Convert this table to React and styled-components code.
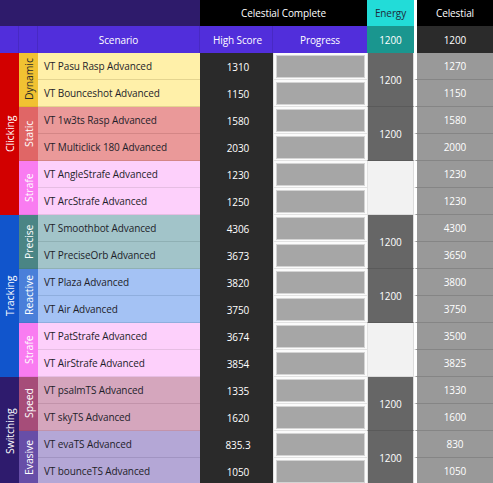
import React from 'react'
import styled, { createGlobalStyle } from 'styled-components'

const Global = createGlobalStyle`
  html, body {
    margin: 0;
    padding: 0;
    background: #fff;
    overflow: hidden;
  }
  body {
    font-family: 'Open Sans', 'Noto Sans', sans-serif;
  }
`

const Sheet = styled.div`
  display: grid;
  grid-template-columns: 19px 19px 162px 73px 94px 47px 79px;
  grid-template-rows: 26px 27px;
  grid-auto-rows: 27px;
  width: 493px;
  font-size: 10px;
  letter-spacing: -0.1px;
`

const Head = styled.div`
  grid-column: span ${p => p.$span || 1};
  background: ${p => p.$bg};
  color: ${p => p.$color || '#fff'};
  display: flex;
  align-items: center;
  justify-content: center;
  box-sizing: border-box;
  padding-left: ${p => p.$shift || 0}px;
  border-left: ${p => (p.$gap ? '3px solid #fff' : 'none')};
  border-right: ${p => (p.$line ? '1px solid rgba(0,0,0,0.1)' : 'none')};
`

const Category = styled.div`
  grid-row: span ${p => p.$rows};
  background: ${p => p.$bg};
  color: #fff;
  display: flex;
  align-items: center;
  justify-content: center;
  writing-mode: vertical-rl;
  transform: rotate(180deg);
  font-size: 10.5px;
`

const Sub = styled(Category)`
  color: ${p => p.$color || '#fff'};
  font-size: 10.5px;
  border-top: 1px solid rgba(0, 0, 0, 0.06);
`

const Scenario = styled.div`
  background: ${p => p.$bg};
  color: #1e1e2a;
  display: flex;
  align-items: center;
  padding-left: 6px;
  box-sizing: border-box;
  border-bottom: 1px solid ${p => p.$line};
  white-space: nowrap;
`

const Score = styled.div`
  background: #2a2a2a;
  color: #fff;
  display: flex;
  align-items: center;
  justify-content: center;
  padding-left: 3px;
`

const Progress = styled.div`
  background: #fbfbfb;
  padding: 2px 2px 1px 2px;
  box-sizing: border-box;
  border-left: 1px solid #e2e2e2;
  border-bottom: 1px solid #e2e2e2;
`

const Bar = styled.div`
  height: 100%;
  background: #a6a6a6;
  border: 1px solid #d4d4d4;
  box-sizing: border-box;
`

const Energy = styled.div`
  grid-row: span 2;
  background: ${p => (p.$empty ? '#f2f2f2' : '#666666')};
  color: #fff;
  display: flex;
  align-items: center;
  justify-content: center;
  box-sizing: border-box;
  border-left: 1px solid #e2e2e2;
  border-right: 1px solid #dcdcdc;
  border-bottom: 1px solid ${p => (p.$empty ? '#dcdcdc' : '#5a5a5a')};
`

const Celestial = styled.div`
  background: #999999;
  color: #fff;
  display: flex;
  align-items: center;
  justify-content: center;
  box-sizing: border-box;
  border-left: 3px solid #fff;
  border-bottom: 1px solid #858585;
`

const groups = [
  {
    name: 'Clicking', bg: '#d20000',
    subs: [
      { name: 'Dynamic', bg: '#f1c232', color: '#2a2a2a', row: '#fff0a9', line: '#e4d48f', energy: '1200',
        items: [['VT Pasu Rasp Advanced', '1310', '1270'], ['VT Bounceshot Advanced', '1150', '1150']] },
      { name: 'Static', bg: '#e06666', row: '#ea9999', line: '#d48686', energy: '1200',
        items: [['VT 1w3ts Rasp Advanced', '1580', '1580'], ['VT Multiclick 180 Advanced', '2030', '2000']] },
      { name: 'Strafe', bg: '#f97cf1', row: '#fdd0fb', line: '#e6bde3',
        items: [['VT AngleStrafe Advanced', '1230', '1230'], ['VT ArcStrafe Advanced', '1250', '1230']] },
    ],
  },
  {
    name: 'Tracking', bg: '#1155cc',
    subs: [
      { name: 'Precise', bg: '#4a8585', row: '#a2c4c9', line: '#8fb0b4', energy: '1200',
        items: [['VT Smoothbot Advanced', '4306', '4300'], ['VT PreciseOrb Advanced', '3673', '3650']] },
      { name: 'Reactive', bg: '#4a7fd9', row: '#a4c2f4', line: '#8faede', energy: '1200',
        items: [['VT Plaza Advanced', '3820', '3800'], ['VT Air Advanced', '3750', '3750']] },
      { name: 'Strafe', bg: '#f97cf1', row: '#fdd0fb', line: '#e6bde3',
        items: [['VT PatStrafe Advanced', '3674', '3500'], ['VT AirStrafe Advanced', '3854', '3825']] },
    ],
  },
  {
    name: 'Switching', bg: '#2e1b6d',
    subs: [
      { name: 'Speed', bg: '#a64d79', row: '#d5a6bd', line: '#c293aa', energy: '1200',
        items: [['VT psalmTS Advanced', '1335', '1330'], ['VT skyTS Advanced', '1620', '1600']] },
      { name: 'Evasive', bg: '#674ea7', row: '#b4a7d6', line: '#a194c2', energy: '1200',
        items: [['VT evaTS Advanced', '835.3', '830'], ['VT bounceTS Advanced', '1050', '1050']] },
    ],
  },
]

export default function App() {
  const cells = []
  groups.forEach(g => {
    const total = g.subs.reduce((n, s) => n + s.items.length, 0)
    g.subs.forEach((s, si) => {
      s.items.forEach(([name, hs, cel], i) => {
        const key = `${g.name}-${s.name}-${i}`
        if (si === 0 && i === 0) {
          cells.push(<Category key={key + 'c'} $rows={total} $bg={g.bg}>{g.name}</Category>)
        }
        if (i === 0) {
          cells.push(
            <Sub key={key + 's'} $rows={s.items.length} $bg={s.bg} $color={s.color}>{s.name}</Sub>
          )
        }
        cells.push(<Scenario key={key + 'n'} $bg={s.row} $line={s.line}>{name}</Scenario>)
        cells.push(<Score key={key + 'h'}>{hs}</Score>)
        cells.push(<Progress key={key + 'p'}><Bar /></Progress>)
        if (i === 0) {
          cells.push(<Energy key={key + 'e'} $empty={!s.energy}>{s.energy}</Energy>)
        }
        cells.push(<Celestial key={key + 'x'}>{cel}</Celestial>)
      })
    })
  })

  return (
    <>
      <Global />
      <Sheet>
        <Head $span={3} $bg="#2e1b6b" />
        <Head $span={2} $bg="#000">Celestial Complete</Head>
        <Head $bg="#22dcd8" $color="#1d2a3a">Energy</Head>
        <Head $bg="#000" $gap>Celestial</Head>

        <Head $bg="#512edb" $line />
        <Head $bg="#512edb" $line />
        <Head $bg="#512edb" $line>Scenario</Head>
        <Head $bg="#512edb" $line $shift={3}>High Score</Head>
        <Head $bg="#512edb">Progress</Head>
        <Head $bg="#1a968f">1200</Head>
        <Head $bg="#2b2b2b" $gap>1200</Head>

        {cells}
      </Sheet>
    </>
  )
}
